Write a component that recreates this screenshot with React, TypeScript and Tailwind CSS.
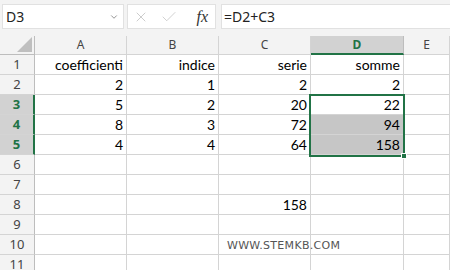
import { ChevronDown, X, Check } from 'lucide-react';

const cols = [
  { key: 'A', w: 'w-[92px]' },
  { key: 'B', w: 'w-[92px]' },
  { key: 'C', w: 'w-[92px]' },
  { key: 'D', w: 'w-[93px]' },
  { key: 'E', w: 'flex-1' },
];

const rows: (string | number | null)[][] = [
  ['coefficienti', 'indice', 'serie', 'somme'],
  [2, 1, 2, 2],
  [5, 2, 20, 22],
  [8, 3, 72, 94],
  [4, 4, 64, 158],
  [null, null, null, null],
  [null, null, null, null],
  [null, null, 158, null],
  [null, null, null, null],
  [null, null, null, null],
  [null, null, null, null],
];

const selectedRows = [3, 4, 5];

export default function App() {
  return (
    <div className="w-[450px] h-[270px] overflow-hidden bg-white" style={{ fontFamily: 'Lato, sans-serif' }}>
      {/* formula bar */}
      <div className="h-[36px] bg-[#f3f3f3] flex items-start pt-[4px] pl-[2px] gap-[3px]">
        <div className="w-[122px] h-[25px] bg-white border border-[#e1e1e1] flex items-center justify-between pl-[3px] pr-[4px]">
          <span className="text-[14px] text-[#222] font-['Noto_Sans',sans-serif]">D3</span>
          <ChevronDown size={10} strokeWidth={1.5} className="text-[#555]" />
        </div>
        <div className="w-[89px] h-[25px] bg-white border border-[#e1e1e1] flex items-center pl-[5px] pr-[7px]">
          <X size={16} strokeWidth={0.9} className="text-[#aaa]" />
          <Check size={18} strokeWidth={0.9} className="text-[#bbb] ml-[11px]" />
          <span className="ml-auto text-[16px] italic text-[#333] font-['Liberation_Serif',serif]">fx</span>
        </div>
        <div className="flex-1 h-[25px] bg-white border-y border-l border-[#e1e1e1] flex items-center pl-[2px] ml-[2px]">
          <span className="text-[14px] text-[#222] font-['Noto_Sans',sans-serif]">=D2+C3</span>
        </div>
      </div>

      {/* grid */}
      <div className="relative">
        {/* column headers */}
        <div className="flex h-[19px] bg-[#f3f3f3]">
          <div className="w-[35px] h-full border-r border-b border-[#bdbdbd] relative">
            <div className="absolute right-[2px] bottom-[2px] w-0 h-0 border-l-[15px] border-l-transparent border-b-[15px] border-b-[#bfbfbf]" />
          </div>
          {cols.map((c) => (
            <div
              key={c.key}
              className={`${c.w} h-full flex items-center justify-center text-[12px] font-['Noto_Sans',sans-serif] ${
                c.key === 'D'
                  ? 'bg-[#d2d2d2] border-b-2 border-b-[#217346] border-r border-r-[#bdbdbd] text-[#217346] font-bold'
                  : 'border-r border-b border-[#d4d4d4] text-[#444]'
              }`}
            >
              {c.key}
            </div>
          ))}
        </div>

        {/* rows */}
        {rows.map((r, i) => {
          const n = i + 1;
          const sel = selectedRows.includes(n);
          return (
            <div key={n} className="flex h-[20px]">
              <div
                className={`w-[35px] h-full flex items-center justify-center text-[13px] font-['Noto_Sans',sans-serif] border-b border-[#d4d4d4] ${
                  sel
                    ? 'bg-[#d2d2d2] border-r-2 border-r-[#217346] text-[#217346] font-bold'
                    : 'bg-[#f3f3f3] border-r border-r-[#bdbdbd] text-[#444]'
                }`}
              >
                {n}
              </div>
              {cols.map((c, j) => {
                const v = j < 4 ? r[j] : null;
                const shaded = c.key === 'D' && (n === 4 || n === 5);
                return (
                  <div
                    key={c.key}
                    className={`${c.w} h-full border-r border-b border-[#d4d4d4] flex items-center justify-end pr-[3px] text-[14px] text-black ${
                      shaded ? 'bg-[#c6c6c6]' : ''
                    }`}
                  >
                    {v}
                  </div>
                );
              })}
            </div>
          );
        })}

        {/* selection D3:D5 */}
        <div className="absolute left-[309px] top-[58px] w-[96px] h-[63px] border-2 border-[#217346] pointer-events-none" />
        <div className="absolute left-[401px] top-[117px] w-[6px] h-[6px] bg-[#217346] border border-white" />

        {/* watermark */}
        <div className="absolute left-[227px] top-[202px] text-[11px] tracking-[0.3px] text-[#555] font-['DejaVu_Sans',sans-serif]">
          WWW.STEMKB.COM
        </div>
      </div>
    </div>
  );
}
